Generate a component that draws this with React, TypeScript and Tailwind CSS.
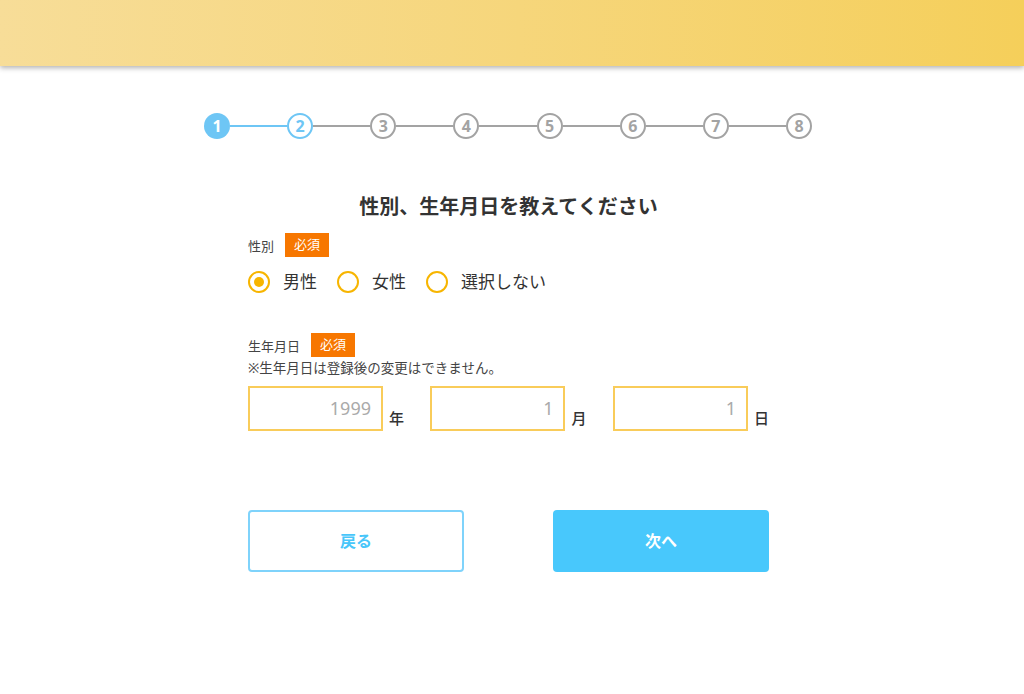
import { useState } from "react";

const steps = [1, 2, 3, 4, 5, 6, 7, 8];
const current = 1;

function Stepper() {
  return (
    <div className="ml-[204px] flex w-[608px] items-center">
      {steps.map((n, i) => (
        <div key={n} className={i === 0 ? "flex items-center" : "flex flex-1 items-center"}>
          {i > 0 && (
            <div className={n <= current + 1 ? "h-[2px] flex-1 bg-[#6ec6f5]" : "h-[2px] flex-1 bg-[#a3a3a3]"} />
          )}
          {n <= current ? (
            <div className="flex h-[26px] w-[26px] items-center justify-center rounded-full bg-[#6ec6f5] text-[16px] font-bold text-white">
              {n}
            </div>
          ) : n === current + 1 ? (
            <div className="flex h-[26px] w-[26px] items-center justify-center rounded-full border-2 border-[#6ec6f5] bg-white text-[16px] font-bold text-[#6ec6f5]">
              {n}
            </div>
          ) : (
            <div className="flex h-[26px] w-[26px] items-center justify-center rounded-full border-2 border-[#a3a3a3] bg-white text-[16px] font-bold text-[#a3a3a3]">
              {n}
            </div>
          )}
        </div>
      ))}
    </div>
  );
}

function Required() {
  return (
    <span className="ml-[11px] flex h-[24px] items-center bg-[#f77700] px-[9px] text-[13px] text-white">必須</span>
  );
}

function Radio({ label, checked, onClick }: { label: string; checked: boolean; onClick: () => void }) {
  return (
    <button type="button" onClick={onClick} className="mr-[20px] flex items-center">
      <span className="flex h-[22px] w-[22px] items-center justify-center rounded-full border-2 border-[#f7b500]">
        {checked && <span className="h-[10px] w-[10px] rounded-full bg-[#f7b500]" />}
      </span>
      <span className="ml-[13px] text-[17px] text-[#333]">{label}</span>
    </button>
  );
}

function DateBox({ value, unit }: { value: string; unit: string }) {
  return (
    <div className="flex items-end">
      <div className="flex h-[45px] w-[135px] items-center justify-end border-2 border-[#f9cc5a] pr-[10px] text-[18px] text-[#aaa]">
        {value}
      </div>
      <span className="mb-[1px] ml-[6px] text-[15px] font-medium text-[#333]">{unit}</span>
    </div>
  );
}

export default function App() {
  const [gender, setGender] = useState("male");

  return (
    <div
      className="min-h-[694px] bg-white"
      style={{ fontFamily: '"Noto Sans", "Noto Sans CJK JP", sans-serif' }}
    >
      <header className="h-[66px] bg-gradient-to-r from-[#f7dd98] to-[#f5cf5a] shadow-[0_2px_5px_rgba(0,0,0,0.3)]" />

      <div className="pt-[47px]">
        <Stepper />
      </div>

      <main className="ml-[248px] w-[521px]">
        <h1 className="mt-[53px] text-center text-[20px] font-bold leading-[30px] text-[#333]">
          性別、生年月日を教えてください
        </h1>

        <div className="mt-[11px] flex items-center">
          <span className="mt-[4px] text-[13px] text-[#444]">性別</span>
          <Required />
        </div>

        <div className="mt-[12px] flex items-center">
          <Radio label="男性" checked={gender === "male"} onClick={() => setGender("male")} />
          <Radio label="女性" checked={gender === "female"} onClick={() => setGender("female")} />
          <Radio label="選択しない" checked={gender === "none"} onClick={() => setGender("none")} />
        </div>

        <div className="mt-[38px] flex items-center">
          <span className="mt-[4px] text-[13px] text-[#444]">生年月日</span>
          <Required />
        </div>
        <p className="mt-[3px] text-[13.5px] leading-[17px] text-[#444]">※生年月日は登録後の変更はできません。</p>

        <div className="mt-[9px] flex justify-between">
          <DateBox value="1999" unit="年" />
          <DateBox value="1" unit="月" />
          <DateBox value="1" unit="日" />
        </div>

        <div className="mt-[79px] flex justify-between">
          <button
            type="button"
            className="h-[62px] w-[216px] rounded-[4px] border-2 border-[#7fd3fb] bg-white text-[16px] font-bold text-[#48c6fa]"
          >
            戻る
          </button>
          <button
            type="button"
            className="h-[62px] w-[216px] rounded-[4px] bg-[#48c8fc] text-[16px] font-bold text-white"
          >
            次へ
          </button>
        </div>
      </main>
    </div>
  );
}
